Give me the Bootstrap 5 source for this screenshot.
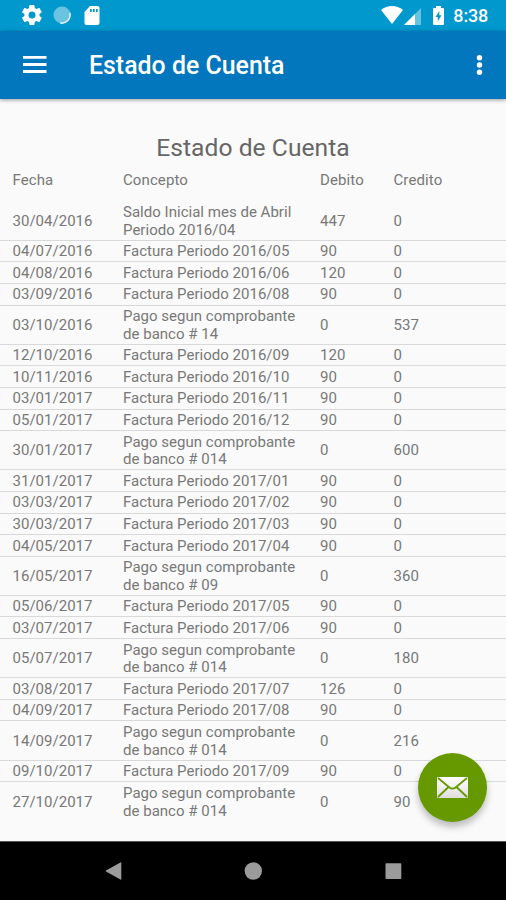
<!DOCTYPE html>
<html lang="es">
<head>
<meta charset="utf-8">
<meta name="viewport" content="width=device-width, initial-scale=1">
<title>Estado de Cuenta</title>
<link href="https://cdn.jsdelivr.net/npm/bootstrap@5.3.0/dist/css/bootstrap.min.css" rel="stylesheet">
<style>
body{font-family:Roboto,"Liberation Sans",sans-serif;background:#fafafa;color:#787878}
.screen{height:900px}
.status{height:30.5px;background:#0199cd;padding:0 18px 0 22px;color:#fff}
.status svg,.appbar svg,.sysnav svg,.fab svg{display:block;flex:none}
.clock{font-size:18px;font-weight:500;line-height:30px;padding-top:1px;margin-left:9px;letter-spacing:-.2px}
.sdcard{margin-left:10px}
.wifi{margin-right:1px}
.signal{margin-top:2px}
.appbar{height:68px;background:#0277bd;padding:0 19px 0 22px;box-shadow:0 1px 4px rgba(0,0,0,.4);z-index:1}
.appbar h1{font-size:24.9px;font-weight:500;line-height:32px;margin:3px 0 0 42px}
.heading{font-size:24.6px;font-weight:400;line-height:30px;margin:0;padding-top:34.5px;color:#666;letter-spacing:.05px}
.line-item{display:grid;grid-template-columns:110.5px 197px 73.5px 1fr;padding:2px 0 0 12.5px;align-items:center;font-size:15px;line-height:17.6px;height:21.6px;border-bottom:1px solid #d9d9d9;letter-spacing:.02px}
.line-item.tall{height:39.2px}
.line-item.head{height:38.6px;padding-top:0;padding-bottom:4px;border:0;letter-spacing:.1px}
.line-item:last-child{border:0}
.fab{right:19px;bottom:78px;width:69px;height:69px;background:#669900;box-shadow:0 5px 7px rgba(0,0,0,.25)}
.sysnav{height:59px;background:#000;border-top:1px solid #555}
</style>
</head>
<body>
<div class="screen d-flex flex-column position-relative overflow-hidden">
  <div class="status d-flex align-items-center">
    <svg width="20" height="20" viewBox="2 2 20 20" fill="#fff"><path d="M19.400 13c.1-.3.1-.6.1-1s0-.7-.1-1l2.100-1.600c.2-.2.2-.4.1-.6l-2-3.500c-.1-.2-.4-.3-.6-.2l-2.500 1c-.5-.4-1.100-.7-1.700-1l-.4-2.600c0-.3-.2-.5-.5-.5h-4c-.2 0-.4.200-.5.5L9 5.100c-.6.300-1.200.6-1.700 1l-2.500-1c-.2-.1-.5 0-.6.2l-2 3.500c-.1.200-.1.400.1.6L4.500 11c0 .3-.1.700-.1 1s0 .7.1 1l-2.200 1.600c-.2.200-.2.400-.1.6l2 3.500c.1.200.4.300.6.200l2.500-1c.5.4 1.100.7 1.700 1l.4 2.600c.1.300.3.500.5.5h4c.3 0 .5-.2.500-.5l.4-2.600c.6-.3 1.200-.6 1.700-1l2.500 1c.2.100.5 0 .6-.2l2-3.500c.1-.2.1-.4-.1-.6zM12 15.500a3.500 3.500 0 1 1 0-7 3.500 3.500 0 0 1 0 7z"/></svg>
    <svg class="ms-2" width="24" height="20" viewBox="0 0 24 20"><circle cx="12" cy="10" r="8.500" fill="#69c3e1"/><path d="M19.900 8a8.300 8.300 0 0 1-9.600 10" fill="none" stroke="#e6f5fa" stroke-width="1.500"/></svg>
    <svg class="sdcard" width="16" height="19" viewBox="0 0 16 19"><path fill="#fff" fill-rule="evenodd" d="M6 0h7.500Q15.500 0 15.500 2v15q0 2-2 2h-11q-2 0-2-2V6zM6 3v3h1.700V3zm3 0v3h1.700V3zm3 0v3h1.700V3z"/></svg>
    <svg class="wifi ms-auto" width="22" height="18" viewBox="0 0 22 18"><path fill="#fff" d="M0 4Q5 0 11 0t11 4L11 18z"/></svg>
    <svg class="signal me-2" width="17" height="17" viewBox="0 0 17 17"><path fill="#fff" opacity=".4" d="M17 0v17H0z"/><path fill="#fff" d="M11 6v11H0z"/></svg>
    <svg class="ms-1" width="11" height="19" viewBox="0 0 11 19"><path fill="#fff" fill-rule="evenodd" d="M3 0h5v2h2q1 0 1 1v15q0 1-1 1H1q-1 0-1-1V3q0-1 1-1h2zM6.300 5 2.500 11h2.300v4.500L8.500 9.300H6.300z"/></svg>
    <span class="clock">8:38</span>
  </div>
  <header class="appbar d-flex align-items-center text-white">
    <svg width="25" height="19" viewBox="0 0 25 19"><path fill="#fff" d="M1 1h23.500v2.800H1zm0 7.100h23.500v2.800H1zm0 7h23.500v2.800H1z"/></svg>
    <h1>Estado de Cuenta</h1>
    <svg class="ms-auto" width="15" height="22" viewBox="0 0 15 22"><g fill="#fff"><circle cx="7.500" cy="3.800" r="2.700"/><circle cx="7.500" cy="11" r="2.700"/><circle cx="7.500" cy="18.200" r="2.700"/></g></svg>
  </header>
  <main class="flex-grow-1">
    <h2 class="heading text-center">Estado de Cuenta</h2>
    <div>
      <div class="line-item head"><span>Fecha</span><span>Concepto</span><span>Debito</span><span>Credito</span></div>
      <div class="line-item tall"><span>30/04/2016</span><span>Saldo Inicial mes de Abril<br>Periodo 2016/04</span><span>447</span><span>0</span></div>
      <div class="line-item"><span>04/07/2016</span><span>Factura Periodo 2016/05</span><span>90</span><span>0</span></div>
      <div class="line-item"><span>04/08/2016</span><span>Factura Periodo 2016/06</span><span>120</span><span>0</span></div>
      <div class="line-item"><span>03/09/2016</span><span>Factura Periodo 2016/08</span><span>90</span><span>0</span></div>
      <div class="line-item tall"><span>03/10/2016</span><span>Pago segun comprobante<br>de banco # 14</span><span>0</span><span>537</span></div>
      <div class="line-item"><span>12/10/2016</span><span>Factura Periodo 2016/09</span><span>120</span><span>0</span></div>
      <div class="line-item"><span>10/11/2016</span><span>Factura Periodo 2016/10</span><span>90</span><span>0</span></div>
      <div class="line-item"><span>03/01/2017</span><span>Factura Periodo 2016/11</span><span>90</span><span>0</span></div>
      <div class="line-item"><span>05/01/2017</span><span>Factura Periodo 2016/12</span><span>90</span><span>0</span></div>
      <div class="line-item tall"><span>30/01/2017</span><span>Pago segun comprobante<br>de banco # 014</span><span>0</span><span>600</span></div>
      <div class="line-item"><span>31/01/2017</span><span>Factura Periodo 2017/01</span><span>90</span><span>0</span></div>
      <div class="line-item"><span>03/03/2017</span><span>Factura Periodo 2017/02</span><span>90</span><span>0</span></div>
      <div class="line-item"><span>30/03/2017</span><span>Factura Periodo 2017/03</span><span>90</span><span>0</span></div>
      <div class="line-item"><span>04/05/2017</span><span>Factura Periodo 2017/04</span><span>90</span><span>0</span></div>
      <div class="line-item tall"><span>16/05/2017</span><span>Pago segun comprobante<br>de banco # 09</span><span>0</span><span>360</span></div>
      <div class="line-item"><span>05/06/2017</span><span>Factura Periodo 2017/05</span><span>90</span><span>0</span></div>
      <div class="line-item"><span>03/07/2017</span><span>Factura Periodo 2017/06</span><span>90</span><span>0</span></div>
      <div class="line-item tall"><span>05/07/2017</span><span>Pago segun comprobante<br>de banco # 014</span><span>0</span><span>180</span></div>
      <div class="line-item"><span>03/08/2017</span><span>Factura Periodo 2017/07</span><span>126</span><span>0</span></div>
      <div class="line-item"><span>04/09/2017</span><span>Factura Periodo 2017/08</span><span>90</span><span>0</span></div>
      <div class="line-item tall"><span>14/09/2017</span><span>Pago segun comprobante<br>de banco # 014</span><span>0</span><span>216</span></div>
      <div class="line-item"><span>09/10/2017</span><span>Factura Periodo 2017/09</span><span>90</span><span>0</span></div>
      <div class="line-item tall"><span>27/10/2017</span><span>Pago segun comprobante<br>de banco # 014</span><span>0</span><span>90</span></div>
    </div>
  </main>
  <button class="fab position-absolute rounded-circle border-0 p-0 d-flex align-items-center justify-content-center" aria-label="Enviar correo">
    <svg width="31" height="21" viewBox="0 0 31 21"><defs><linearGradient id="paper" x2="0" y2="1"><stop stop-color="#fff"/><stop offset="1" stop-color="#dedede"/></linearGradient></defs><rect width="31" height="21" rx="1" fill="url(#paper)"/><path d="M1 1l11.500 9.500q3 2.300 6 0L30 1M1 20l10.500-10M30 20l-10.500-10" fill="none" stroke="#669900" stroke-width="1.800"/></svg>
  </button>
  <nav class="sysnav d-flex align-items-center justify-content-center">
    <svg width="300" height="20" viewBox="0 0 300 20" fill="#9b9b9b"><path d="M18.300 1.800v16.400q0 .9-.9.400L3 10.600q-.9-.6 0-1.200l14.400-8q.9-.5.900.4z"/><circle cx="150.300" cy="10" r="8.700"/><rect x="282.500" y="2.200" width="15.800" height="15.800" rx=".8"/></svg>
  </nav>
</div>
<script src="https://cdn.jsdelivr.net/npm/bootstrap@5.3.0/dist/js/bootstrap.bundle.min.js"></script>
</body>
</html>
